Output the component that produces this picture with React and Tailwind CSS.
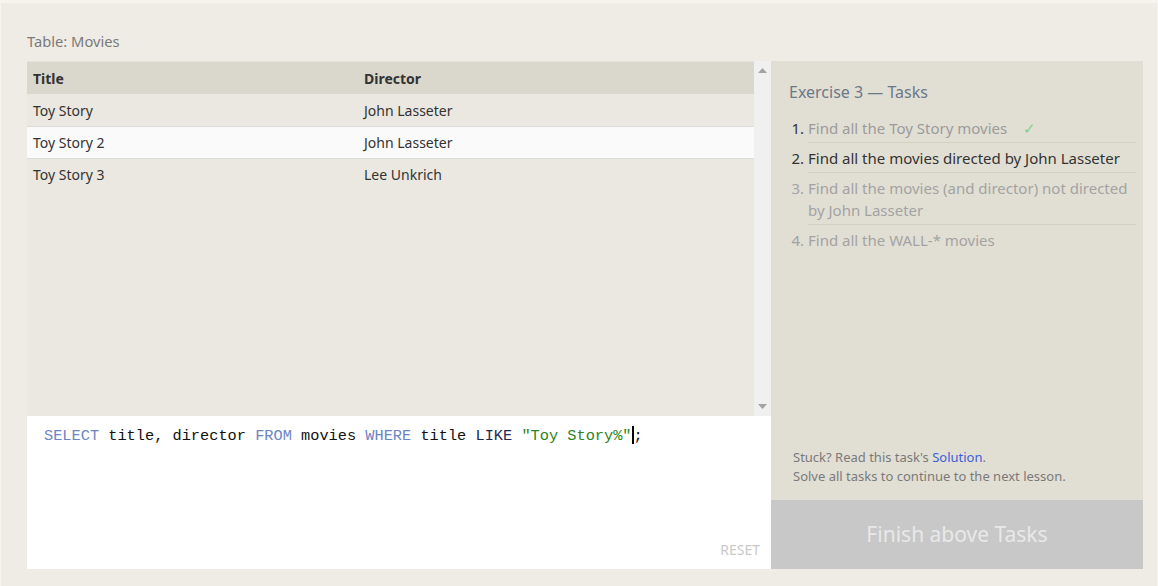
import React from "react";

const sans = { fontFamily: '"Noto Sans", "Open Sans", sans-serif' };

function Tri({ down }) {
  return (
    <svg width="9" height="5" viewBox="0 0 9 5" className="block">
      {down ? <path d="M0 0 L9 0 L4.5 5 Z" fill="#a3a3a3" /> : <path d="M0 5 L9 5 L4.5 0 Z" fill="#a3a3a3" />}
    </svg>
  );
}

export default function App() {
  const rows = [
    ["Toy Story", "John Lasseter", "bg-[#eae8e1]"],
    ["Toy Story 2", "John Lasseter", "bg-[#fafafa]"],
    ["Toy Story 3", "Lee Unkrich", "bg-[#eae8e1]"],
  ];
  return (
    <div
      className="w-[1158px] h-[586px] bg-[#efece5] border-t-[3px] border-x border-[#f6f4ef] pl-[26px] pt-[28px] overflow-hidden"
      style={sans}
    >
      <div className="text-[14.7px] leading-[20px] text-[#7a7a7a] mb-[10px]">Table: Movies</div>
      <div className="flex h-[508px]">
        {/* left */}
        <div className="w-[744px] flex flex-col">
          <div className="h-[355px] flex bg-[#eae8e1]">
            <div className="flex-1">
              <div className="flex h-[33px] items-center bg-[#dad8cc] border-t border-[#e4e2d9] text-[14px] font-bold text-[#333]">
                <div className="w-[331px] pl-[6px]">Title</div>
                <div className="pl-[6px]">Director</div>
              </div>
              {rows.map(([t, d, bg], i) => (
                <div
                  key={t}
                  className={`flex h-[32px] items-center text-[14px] text-[#333] ${bg} ${i > 0 ? "border-t border-[#dcdcdc]" : ""} ${i === 0 ? "border-t border-[#eae8e1]" : ""}`}
                >
                  <div className="w-[331px] pl-[6px]">{t}</div>
                  <div className="pl-[6px]">{d}</div>
                </div>
              ))}
            </div>
            <div className="w-[17px] bg-[#f0f0f0] flex flex-col items-center justify-between pt-[7px] pb-[7px]">
              <Tri />
              <Tri down />
            </div>
          </div>
          <div className="flex-1 bg-white relative pl-[17px] pt-[10px]">
            <div
              className="text-[15.3px] leading-[20px] whitespace-pre text-[#111]"
              style={{ fontFamily: '"Liberation Mono", "DejaVu Sans Mono", monospace' }}
            >
              <span className="text-[#6d85c2]">SELECT</span> title, director{" "}
              <span className="text-[#6d85c2]">FROM</span> movies{" "}
              <span className="text-[#6d85c2]">WHERE</span> title{" "}
              <span className="text-[#1c2a55]">LIKE</span>{" "}
              <span className="text-[#2a8520]">"Toy Story%"</span>
              <span className="inline-block w-[2px] h-[18px] bg-black align-[-4px]" />;
            </div>
            <div className="absolute right-[11px] bottom-[9px] text-[14px] text-[#c9c9c9]">RESET</div>
          </div>
        </div>
        {/* right */}
        <div className="w-[372px] flex flex-col">
          <div className="flex-1 bg-[#e1dfd4] flex flex-col">
            <div className="pl-[18px] pt-[20px] text-[16px] leading-[22px] text-[#6b7888]">Exercise 3 — Tasks</div>
            <ol className="list-decimal pl-[37px] pr-[7px] mt-[10px] text-[15px] leading-[22px] marker:text-[#333]">
              <li className="pt-[4px] pb-[3px] border-b border-[#d3d1c6] text-[#9b9b9b]">
                Find all the Toy Story movies <span className="ml-[12px] text-[#86cc86]">✓</span>
              </li>
              <li className="pt-[4px] pb-[3px] border-b border-[#d3d1c6] text-[#333]">
                Find all the movies directed by John Lasseter
              </li>
              <li className="pt-[4px] pb-[3px] border-b border-[#d3d1c6] text-[#a3a3a3] marker:text-[#a3a3a3]">
                Find all the movies (and director) not directed by John Lasseter
              </li>
              <li className="pt-[4px] pb-[3px] text-[#a3a3a3] marker:text-[#a3a3a3]">Find all the WALL-* movies</li>
            </ol>
            <div className="mt-auto pl-[22px] pb-[14px] text-[13px] leading-[19px] text-[#7a7a7a]">
              <div>
                Stuck? Read this task's <span className="text-[#3a5fd6]">Solution</span>.
              </div>
              <div>Solve all tasks to continue to the next lesson.</div>
            </div>
          </div>
          <div className="h-[69px] bg-[#c8c8c8] flex items-center justify-center text-[21px] text-[#e8e8e8]">
            Finish above Tasks
          </div>
        </div>
      </div>
    </div>
  );
}
